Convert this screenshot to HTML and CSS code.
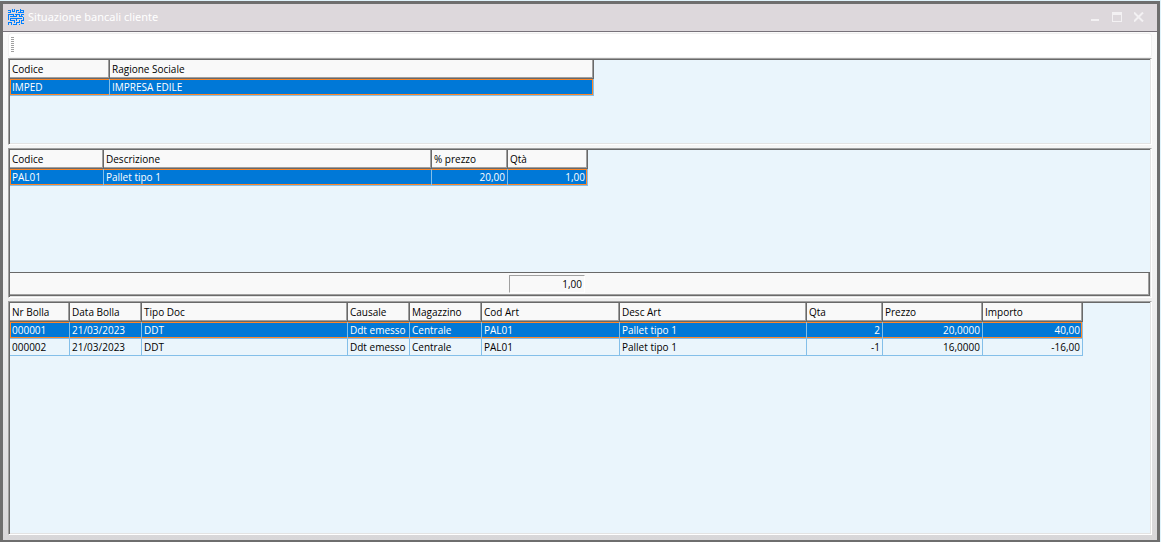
FILE: index.html
```html
<!DOCTYPE html>
<html lang="it">
<head>
<meta charset="utf-8">
<title>Situazione bancali cliente</title>
<link rel="stylesheet" href="styles.css">
</head>
<body>
<div class="window">
  <header class="titlebar">
    <svg class="logo" width="16" height="16" viewBox="0 0 16 16" fill="none" stroke="#007fff" stroke-width="1" shape-rendering="crispEdges" aria-hidden="true">
      <path d="M0 1.500h3M2.500 1v3M0 3.500h3M4.500 0v3M4 2.500h3M6.500 0v3M8.500 1v3M8 1.500h3M12.500 0v4M12 1.500h4M15.500 1v2M10 3.500h6M0.500 5v6M0 5.500h6M5.500 5v3M2 7.500h7M8.500 5v3M7 5.500h5M11.500 5v3M11 7.500h4M13.500 5v3M13 5.500h3M2 9.500h12M15.500 8v4M13 11.500h3M0 10.500h1M2.500 9v3M2 11.500h5M6.500 11v3M8.500 9v3M8 13.500h4M11.500 11v3M0 13.500h4M0.500 13v3M3.500 13v3M5 15.500h4M8.500 13v3M13.500 11v4M13 14.500h3M11 15.500h1"/>
    </svg>
    <h1 class="title">Situazione bancali cliente</h1>
    <div class="controls">
      <button class="control" type="button" aria-label="Riduci a icona"><svg width="10" height="10" viewBox="0 0 10 10"><path d="M1 7h8v2H1z" fill="currentColor"/></svg></button>
      <button class="control" type="button" aria-label="Ingrandisci"><svg width="10" height="10" viewBox="0 0 10 10"><path d="M0 0h10v10H0zM1 3v6h8V3z" fill="currentColor" fill-rule="evenodd"/></svg></button>
      <button class="control" type="button" aria-label="Chiudi"><svg width="10" height="10" viewBox="0 0 10 10"><path d="M0 .5l9 9M9 .5l-9 9" stroke="currentColor" stroke-width="2" fill="none"/></svg></button>
    </div>
  </header>
  <main class="content">
    <div class="toolbar"><span class="grip"></span></div>

    <section class="panel panel-customers">
      <table class="grid customers">
        <colgroup><col class="w100"><col class="w484"></colgroup>
        <thead><tr><th>Codice</th><th>Ragione Sociale</th></tr></thead>
        <tbody><tr class="selected"><td>IMPED</td><td>IMPRESA EDILE</td></tr></tbody>
      </table>
    </section>

    <section class="panel panel-pallets">
      <table class="grid pallets">
        <colgroup><col class="w94"><col class="w328"><col class="w76"><col class="w80"></colgroup>
        <thead><tr><th>Codice</th><th>Descrizione</th><th>% prezzo</th><th>Qtà</th></tr></thead>
        <tbody><tr class="selected"><td>PAL01</td><td>Pallet tipo 1</td><td class="num">20,00</td><td class="num">1,00</td></tr></tbody>
      </table>
      <div class="totals"><input class="total" type="text" value="1,00" aria-label="Totale Qtà" readonly></div>
    </section>

    <section class="panel panel-documents">
      <table class="grid documents">
        <colgroup><col class="w60"><col class="w72"><col class="w206"><col class="w62"><col class="w72"><col class="w138"><col class="w187"><col class="w76"><col class="w100"><col class="w100"></colgroup>
        <thead><tr><th>Nr Bolla</th><th>Data Bolla</th><th>Tipo Doc</th><th>Causale</th><th>Magazzino</th><th>Cod Art</th><th>Desc Art</th><th>Qta</th><th>Prezzo</th><th>Importo</th></tr></thead>
        <tbody>
          <tr class="selected"><td>000001</td><td>21/03/2023</td><td>DDT</td><td>Ddt emesso</td><td>Centrale</td><td>PAL01</td><td>Pallet tipo 1</td><td class="num">2</td><td class="num">20,0000</td><td class="num">40,00</td></tr>
          <tr><td>000002</td><td>21/03/2023</td><td>DDT</td><td>Ddt emesso</td><td>Centrale</td><td>PAL01</td><td>Pallet tipo 1</td><td class="num">-1</td><td class="num">16,0000</td><td class="num">-16,00</td></tr>
        </tbody>
      </table>
    </section>
  </main>
</div>
</body>
</html>
```
FILE: styles.css
```css
* { box-sizing: border-box; }

body {
  margin: 0;
  height: 100vh;
  padding: 1px 1px 0 0;
  background: #dff3fb;
  font-family: "Open Sans", "Noto Sans", sans-serif;
  font-size: 10px;
  color: #000;
}

.window {
  display: flex;
  flex-direction: column;
  height: 100%;
  border: 3px solid #6e6e6e;
  border-bottom-width: 2px;
}

.titlebar {
  display: flex;
  align-items: center;
  height: 28px;
  padding: 0 13px 2px 5px;
  gap: 4px;
  background: #ddd8dc;
  border-bottom: 1px solid #77727a;
}

.logo { flex: none; }

.title {
  flex: 1;
  margin: 0;
  font-family: "Noto Sans", "Open Sans", sans-serif;
  font-size: 11px;
  font-weight: 400;
  line-height: 16px;
  color: #fff;
}

.controls { display: flex; gap: 12px; }

.control {
  width: 10px;
  height: 10px;
  padding: 0;
  border: 0;
  background: none;
  color: #f3f1f3;
}

.control svg { display: block; }

.content {
  flex: 1;
  display: flex;
  flex-direction: column;
  padding: 1px 5px 5px;
  background: linear-gradient(#fafafa, #f0f0f0 50%, #d8d7d9);
}

.toolbar {
  display: flex;
  height: 25px;
  padding: 3px;
  background: #fff;
  border: 1px solid #f0f0f0;
  border-radius: 3px;
}

.grip {
  width: 3px;
  height: 15px;
  margin-left: -1px;
  background: repeating-linear-gradient(#a0a0a0 0 1px, #fff 1px 2px);
}

.panel {
  display: flex;
  flex-direction: column;
  padding: 0 1px 1px;
  border: 1px solid;
  border-color: #a0a0a0 #fff #fff #a0a0a0;
  box-shadow: inset 1px 0 #696969, inset -1px -1px #e3e3e3;
  background: #eaf5fc;
}

.panel::before {
  content: "";
  height: 1px;
  background: #696969;
}

.panel-customers { min-height: 87px; margin-bottom: 3px; }
.panel-pallets { min-height: 150px; margin-bottom: 3px; }
.panel-documents { flex: 1; }

.grid {
  table-layout: fixed;
  border-collapse: separate;
  border-spacing: 0;
}

.customers { width: 584px; }
.pallets { width: 578px; }
.documents { width: 1073px; }

.w60 { width: 60px; }
.w62 { width: 62px; }
.w72 { width: 72px; }
.w76 { width: 76px; }
.w80 { width: 80px; }
.w94 { width: 94px; }
.w100 { width: 100px; }
.w138 { width: 138px; }
.w187 { width: 187px; }
.w206 { width: 206px; }
.w328 { width: 328px; }
.w484 { width: 484px; }

.grid th {
  height: 19px;
  padding: 0 2px;
  border: solid #696969;
  border-width: 0 1px 1px 0;
  box-shadow: inset -1px -1px #a0a0a0;
  background: #f9f9f9;
  font-weight: 400;
  line-height: 18px;
  text-align: left;
  white-space: nowrap;
}

.grid td {
  height: 17px;
  padding: 0 2px;
  border: solid #84bfe9;
  border-width: 0 1px 1px 0;
  line-height: 16px;
  white-space: nowrap;
}

.grid .num { text-align: right; }

.selected td {
  background: #0078d7;
  color: #fff;
  box-shadow: inset 0 1px #ff8728, inset 0 -1px #ff8728;
}

.selected td:first-child { box-shadow: inset 1px 1px #ff8728, inset 0 -1px #ff8728; }
.selected td:last-child { box-shadow: inset -1px -1px #ff8728, inset 0 1px #ff8728; }

.totals {
  display: flex;
  height: 24px;
  margin-top: auto;
  padding: 2px 0 0 499px;
  border: solid #696969;
  border-width: 1px 1px 1px 0;
  box-shadow: inset -1px -1px #a0a0a0;
  background: #f9f9f9;
}

.total {
  width: 76px;
  height: 18px;
  padding: 0 2px;
  border: 1px solid;
  border-color: #a0a0a0 #fff #fff #a0a0a0;
  background: #f9f9f9;
  font: inherit;
  color: #000;
  text-align: right;
}
```
